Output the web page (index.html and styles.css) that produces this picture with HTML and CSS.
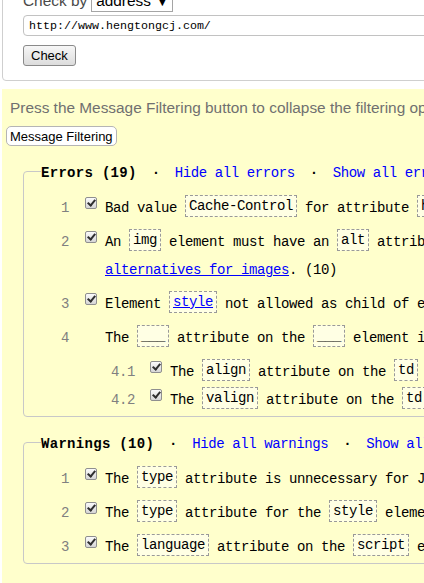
FILE: index.html
```html
<!DOCTYPE html>
<html lang="en">

<head>
    <meta charset="UTF-8">
    <meta name="viewport" content="width=device-width, initial-scale=1.0">
    <title>Validator results</title>
    <link rel="stylesheet" href="styles.css">
</head>

<body>
    <div class="page">
        <form class="check-form">
            <div class="check-by">
                <span>Check by</span>
                <span class="select">address <span class="select-arrow">▼</span></span>
            </div>
            <input type="text" class="url" value="http://www.hengtongcj.com/">
            <button type="button" class="btn-check">Check</button>
        </form>

        <div class="results">
            <p class="hint">Press the Message Filtering button to collapse the filtering options and error/warning/info counts.</p>
            <button type="button" class="btn-filter">Message Filtering</button>

            <!-- Errors -->
            <fieldset class="group">
                <legend><b class="group-title">Errors (19)</b><span class="sep">·</span><a href="#">Hide all errors</a><span class="sep">·</span><a href="#">Show all errors</a></legend>
                <ol class="msgs">
                    <li>
                        <div class="row"><span class="num">1</span><span class="cb"></span><span class="txt">Bad value <code>Cache-Control</code> for attribute <code>http-equiv</code> on element <code>meta</code>.</span></div>
                    </li>
                    <li>
                        <div class="row"><span class="num">2</span><span class="cb"></span><span class="txt">An <code>img</code> element must have an <code>alt</code> attribute, except under certain conditions. For details, consult guidance on providing text<br><a href="#">alternatives for images</a>. (10)</span></div>
                    </li>
                    <li>
                        <div class="row"><span class="num">3</span><span class="cb"></span><span class="txt">Element <code><a href="#">style</a></code> not allowed as child of element <code>body</code> in this context.</span></div>
                    </li>
                    <li>
                        <div class="row"><span class="num">4</span><span class="cb blank"></span><span class="txt">The <code>___</code> attribute on the <code>___</code> element is obsolete. Use CSS instead.</span></div>
                        <ol class="msgs sub">
                            <li>
                                <div class="row"><span class="num">4.1</span><span class="cb"></span><span class="txt">The <code>align</code> attribute on the <code>td</code> element is obsolete. Use CSS instead. (3)</span></div>
                            </li>
                            <li>
                                <div class="row"><span class="num">4.2</span><span class="cb"></span><span class="txt">The <code>valign</code> attribute on the <code>td</code> element is obsolete. Use CSS instead. (3)</span></div>
                            </li>
                        </ol>
                    </li>
                </ol>
            </fieldset>

            <!-- Warnings -->
            <fieldset class="group">
                <legend><b class="group-title">Warnings (10)</b><span class="sep">·</span><a href="#">Hide all warnings</a><span class="sep">·</span><a href="#">Show all warnings</a></legend>
                <ol class="msgs">
                    <li>
                        <div class="row"><span class="num">1</span><span class="cb"></span><span class="txt">The <code>type</code> attribute is unnecessary for JavaScript resources. (6)</span></div>
                    </li>
                    <li>
                        <div class="row"><span class="num">2</span><span class="cb"></span><span class="txt">The <code>type</code> attribute for the <code>style</code> element is not needed and should be omitted.</span></div>
                    </li>
                    <li>
                        <div class="row"><span class="num">3</span><span class="cb"></span><span class="txt">The <code>language</code> attribute on the <code>script</code> element is obsolete. You can safely omit it. (3)</span></div>
                    </li>
                </ol>
            </fieldset>
        </div>
    </div>
</body>

</html>
```

FILE: styles.css
```css
html,
body {
    overflow: hidden;
}

body {
    margin: 0;
    font-family: "Liberation Sans", Arial, sans-serif;
    background-color: #fff;
    color: #000;
}

.page {
    width: 1100px;
    padding-left: 2px;
}

/* top form */
.check-form {
    margin: -17px 0 0;
    padding: 6px 20px 14px;
    border: 1px solid #cfcfcf;
    border-radius: 4px;
}

.check-by {
    display: flex;
    align-items: center;
    gap: 4px;
    height: 22px;
    font-size: 15.4px;
    color: #4a4a4a;
}

.select {
    box-sizing: border-box;
    display: flex;
    align-items: center;
    justify-content: space-between;
    width: 82px;
    height: 22px;
    padding: 0 6px 0 4px;
    border: 1px solid #a5a5a5;
    background-color: #fff;
    color: #000;
}

.select-arrow {
    font-family: "DejaVu Sans", sans-serif;
    font-size: 10px;
}

.url {
    display: block;
    box-sizing: border-box;
    width: 700px;
    height: 21px;
    margin-top: 3px;
    padding: 0 5px;
    border: 1px solid #c2c2c2;
    border-radius: 4px;
    font-family: "Liberation Mono", monospace;
    font-size: 11.67px;
    color: #000;
    outline: none;
}

.btn-check {
    display: block;
    height: 21px;
    margin-top: 9px;
    padding: 0 7px;
    border: 1px solid #8a8a8a;
    border-radius: 3px;
    background: linear-gradient(#f7f7f7, #dcdcdc);
    font-family: "Liberation Sans", Arial, sans-serif;
    font-size: 13px;
    color: #000;
}

/* results */
.results {
    margin-top: 8px;
    padding: 10px 0 30px 4px;
    background-color: #ffffcc;
}

.hint {
    margin: 0 0 9px 4px;
    font-size: 15.4px;
    color: #707070;
    white-space: nowrap;
}

.btn-filter {
    display: block;
    height: 20px;
    padding: 0 3px;
    border: 1px solid #b5b5b5;
    border-radius: 5px;
    background-color: #fff;
    font-family: "Liberation Sans", Arial, sans-serif;
    font-size: 13px;
    color: #000;
}

.group {
    margin: 15px 0 0 17px;
    padding: 13px 0 2px;
    border: 1px solid #c8c8c8;
    border-radius: 4px;
    min-width: 0;
}

.group legend {
    margin-left: 17px;
    padding: 4px 0 0;
    line-height: 16px;
    font-family: "Liberation Mono", monospace;
    font-size: 14px;
    letter-spacing: -0.4px;
    white-space: nowrap;
}

.group-title {
    letter-spacing: 0.3px;
}

.sep {
    display: inline-block;
    width: 38px;
    text-align: center;
    font-weight: bold;
}

.group legend a {
    color: #0000ff;
    text-decoration: none;
}

/* message list */
.msgs {
    list-style: none;
    margin: 0;
    padding: 0;
    font-family: "Liberation Mono", monospace;
    font-size: 14px;
    letter-spacing: -0.4px;
    line-height: 28px;
}

.msgs > li + li {
    margin-top: 6px;
}

.msgs.sub {
    margin: 6px 0 0 66px;
}

.msgs.sub > li + li {
    margin-top: 0;
}

.row {
    display: flex;
    align-items: flex-start;
    white-space: nowrap;
}

.num {
    flex: none;
    width: 45px;
    text-align: right;
    color: #808080;
}

.cb {
    position: relative;
    flex: none;
    width: 10px;
    height: 10px;
    margin: 3px 0 0 16px;
    border: 1px solid #8f8f8f;
    border-radius: 2px;
    background: linear-gradient(#fbfbfb, #d6d6d6);
}

.sub .cb {
    margin-left: 15px;
}

.cb::after {
    content: "";
    position: absolute;
    left: 3px;
    top: 0;
    width: 3px;
    height: 6px;
    border: solid #2f2f2f;
    border-width: 0 2px 2px 0;
    transform: rotate(40deg);
}

.cb.blank {
    visibility: hidden;
}

.txt {
    margin-left: 8px;
}

.txt a {
    color: #0000ff;
    text-decoration: underline;
}

code {
    display: inline-block;
    padding: 0 3px;
    border: 1px dashed #999;
    background-color: #ffffe4;
    font-family: inherit;
    font-size: inherit;
    line-height: 20px;
    vertical-align: 2px;
}
```
